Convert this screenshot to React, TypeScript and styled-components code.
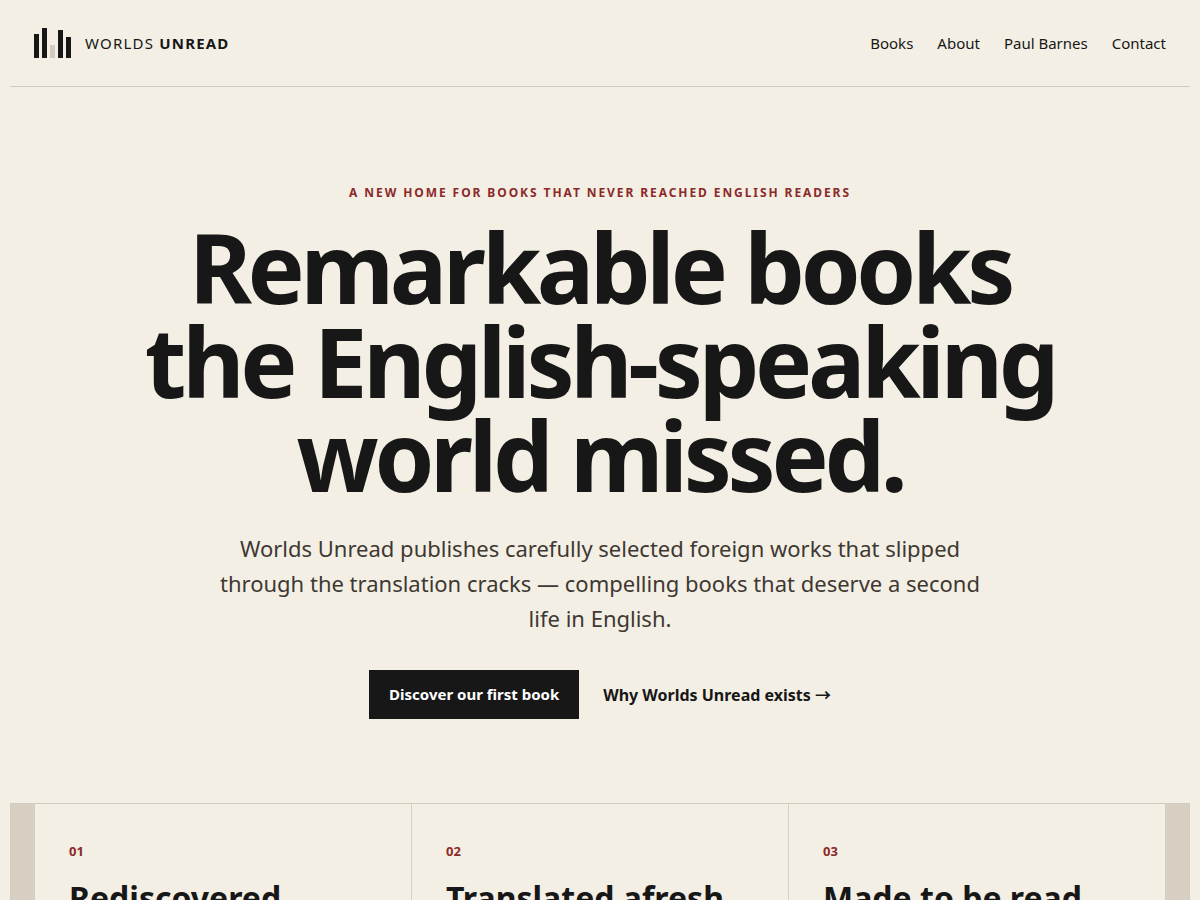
import React from "react";
import styled, { createGlobalStyle } from "styled-components";

const color = {
  paper: "#f4efe4",
  ink: "#171717",
  muted: "#3e3833",
  accent: "#8b2a2b",
  rule: "#d0cbbf",
  stone: "#d7cfc2",
};

const GlobalStyle = createGlobalStyle`
  *, *::before, *::after { box-sizing: border-box; }
  body {
    margin: 0;
    background: ${color.paper};
    color: ${color.ink};
    font-family: "Noto Sans", sans-serif;
    font-size: 16px;
    line-height: 24px;
  }
  a { color: inherit; text-decoration: none; }
`;

const Page = styled.div`
  max-width: 1180px;
  margin: 0 auto;
`;

const Header = styled.header`
  display: flex;
  align-items: center;
  justify-content: space-between;
  padding: 28px 24px;
  border-bottom: 1px solid ${color.rule};
  font-size: 15px;
  line-height: 23px;
`;

const Brand = styled.a`
  display: flex;
  align-items: center;
  gap: 14px;
`;

const Mark = styled.span`
  display: flex;
  align-items: flex-end;
  gap: 3px;
  height: 30px;
`;

const Bar = styled.span<{ $height: number; $faded?: boolean }>`
  width: 5px;
  height: ${(p) => p.$height}px;
  background: ${(p) => (p.$faded ? color.rule : color.ink)};
`;

const BrandName = styled.span`
  letter-spacing: 0.08em;
`;

const Nav = styled.nav`
  display: flex;
  gap: 24px;
`;

const Hero = styled.section`
  display: flex;
  flex-direction: column;
  align-items: center;
  padding: 96px 24px 84px;
  text-align: center;
`;

const Eyebrow = styled.p`
  margin: 0 0 17px;
  color: ${color.accent};
  font-size: 12px;
  font-weight: 700;
  line-height: 20px;
  letter-spacing: 0.16em;
`;

const Headline = styled.h1`
  max-width: 980px;
  margin: 0;
  font-size: 96px;
  font-weight: 700;
  line-height: 94px;
  letter-spacing: -0.045em;
`;

const Lead = styled.p`
  max-width: 760px;
  margin: 29px 0 34px;
  color: ${color.muted};
  font-size: 22px;
  line-height: 35px;
`;

const Actions = styled.div`
  display: flex;
  align-items: center;
  gap: 24px;
  font-weight: 700;
`;

const PrimaryLink = styled.a`
  padding: 12px 20px;
  background: ${color.ink};
  color: #ffffff;
  font-size: 15px;
  line-height: 25px;
`;

const TextLink = styled.a`
  font-family: "Noto Sans", "Noto Sans CJK JP", sans-serif;
`;

const Principles = styled.section`
  display: grid;
  grid-template-columns: repeat(3, 1fr);
  gap: 1px;
  padding: 0 24px;
  border: 1px solid ${color.rule};
  background: ${color.stone};
`;

const Card = styled.article`
  padding: 34px;
  background: ${color.paper};
`;

const CardNumber = styled.span`
  display: block;
  color: ${color.accent};
  font-size: 13px;
  font-weight: 700;
  line-height: 26px;
`;

const CardTitle = styled.h2`
  margin: 16px 0;
  font-size: 32px;
  font-weight: 700;
  line-height: 36px;
`;

const bars = [
  { height: 24 },
  { height: 30 },
  { height: 13, faded: true },
  { height: 28 },
  { height: 21 },
];

const links = [
  { label: "Books", href: "#books" },
  { label: "About", href: "#about" },
  { label: "Paul Barnes", href: "#paul-barnes" },
  { label: "Contact", href: "#contact" },
];

const principles = [
  { number: "01", title: "Rediscovered" },
  { number: "02", title: "Translated afresh" },
  { number: "03", title: "Made to be read" },
];

export default function App() {
  return (
    <>
      <GlobalStyle />
      <Page>
        <Header>
          <Brand href="#">
            <Mark aria-hidden="true">
              {bars.map((bar) => (
                <Bar key={bar.height} $height={bar.height} $faded={bar.faded} />
              ))}
            </Mark>
            <BrandName>
              WORLDS <strong>UNREAD</strong>
            </BrandName>
          </Brand>
          <Nav>
            {links.map((link) => (
              <a key={link.label} href={link.href}>
                {link.label}
              </a>
            ))}
          </Nav>
        </Header>
        <main>
          <Hero>
            <Eyebrow>A NEW HOME FOR BOOKS THAT NEVER REACHED ENGLISH READERS</Eyebrow>
            <Headline>Remarkable books the English-speaking world missed.</Headline>
            <Lead>
              Worlds Unread publishes carefully selected foreign works that slipped through the
              translation cracks — compelling books that deserve a second life in English.
            </Lead>
            <Actions>
              <PrimaryLink href="#books">Discover our first book</PrimaryLink>
              <TextLink href="#about">Why Worlds Unread exists →</TextLink>
            </Actions>
          </Hero>
          <Principles>
            {principles.map((item) => (
              <Card key={item.number}>
                <CardNumber>{item.number}</CardNumber>
                <CardTitle>{item.title}</CardTitle>
              </Card>
            ))}
          </Principles>
        </main>
      </Page>
    </>
  );
}
